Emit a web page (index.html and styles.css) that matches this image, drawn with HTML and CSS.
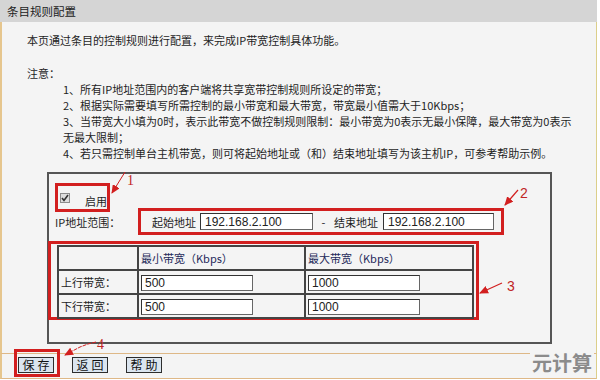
FILE: index.html
```html
<!DOCTYPE html>
<html lang="zh-CN">
<head>
    <meta charset="UTF-8">
    <title>条目规则配置</title>
    <link rel="stylesheet" href="styles.css">
</head>
<body>
    <div class="page">
        <div class="page-title">条目规则配置</div>

        <div class="content">
            <p class="intro">本页通过条目的控制规则进行配置，来完成IP带宽控制具体功能。</p>
            <p class="note-head">注意：</p>
            <div class="notes">
                <p>1、所有IP地址范围内的客户端将共享宽带控制规则所设定的带宽；</p>
                <p>2、根据实际需要填写所需控制的最小带宽和最大带宽，带宽最小值需大于10Kbps；</p>
                <p>3、当带宽大小填为0时，表示此带宽不做控制规则限制：最小带宽为0表示无最小保障，最大带宽为0表示<br>无最大限制；</p>
                <p>4、若只需控制单台主机带宽，则可将起始地址或（和）结束地址填写为该主机IP，可参考帮助示例。</p>
            </div>

            <div class="rule-box">
                <div class="enable mark-box">
                    <span class="check">
                        <svg width="8" height="8" viewBox="0 0 8 8"><path d="M1 4 L3 6.5 L7 1" fill="none" stroke="#333" stroke-width="1.6"/></svg>
                    </span>
                    <span class="enable-text">启用</span>
                </div>

                <div class="ip-row">
                    <span class="ip-label">IP地址范围：</span>
                    <span class="ip-range mark-box">
                        <span>起始地址</span>
                        <input class="txt ip-start" type="text" value="192.168.2.100">
                        <span class="dash">-</span>
                        <span>结束地址</span>
                        <input class="txt ip-end" type="text" value="192.168.2.100">
                    </span>
                </div>

                <div class="bw-wrap mark-box">
                    <table class="bw">
                        <colgroup>
                            <col class="c-name">
                            <col class="c-min">
                            <col class="c-max">
                        </colgroup>
                        <tr>
                            <td></td>
                            <td class="head">最小带宽（Kbps）</td>
                            <td class="head">最大带宽（Kbps）</td>
                        </tr>
                        <tr>
                            <td>上行带宽：</td>
                            <td><input class="txt bw-input" type="text" value="500"></td>
                            <td><input class="txt bw-input" type="text" value="1000"></td>
                        </tr>
                        <tr>
                            <td>下行带宽：</td>
                            <td><input class="txt bw-input" type="text" value="500"></td>
                            <td><input class="txt bw-input" type="text" value="1000"></td>
                        </tr>
                    </table>
                </div>
            </div>
        </div>

        <div class="actions">
            <button class="btn">保存</button>
            <button class="btn">返回</button>
            <button class="btn">帮助</button>
        </div>

        <!-- 标注箭头 -->
        <svg class="marks" width="600" height="380" viewBox="0 0 600 380">
            <defs>
                <marker id="head" markerWidth="9" markerHeight="8" refX="8" refY="4" orient="auto" markerUnits="userSpaceOnUse">
                    <path d="M0,0 L9,4 L0,8 z" fill="#d21f1f"/>
                </marker>
            </defs>
            <line x1="125" y1="172" x2="112" y2="193" stroke="#d21f1f" stroke-width="1" marker-end="url(#head)"/>
            <text class="num serif" x="127" y="185">1</text>
            <line x1="518" y1="190" x2="505" y2="205" stroke="#d21f1f" stroke-width="1.2" marker-end="url(#head)"/>
            <text class="num" x="520" y="198">2</text>
            <line x1="502" y1="283" x2="480" y2="293" stroke="#d21f1f" stroke-width="1.2" marker-end="url(#head)"/>
            <text class="num" x="507" y="291">3</text>
            <path d="M96 342 L88 344 L80 347 L65 355" fill="none" stroke="#d21f1f" stroke-width="1" stroke-dasharray="4 1" marker-end="url(#head)"/>
            <text class="num serif" x="97" y="349">4</text>
            <rect x="15.5" y="350.5" width="43" height="25" fill="none" stroke="#d21f1f" stroke-width="3"/>
        </svg>

        <div class="watermark">元计算</div>
    </div>
</body>
</html>
```

FILE: styles.css
```css
* {
    box-sizing: border-box;
}
body {
    margin: 0;
    background: #fff;
    font-family: "Noto Sans CJK SC", sans-serif;
    font-size: 11px;
    color: #1e1e1e;
}
p {
    margin: 0;
    line-height: 16px;
    white-space: nowrap;
}
.page {
    position: relative;
    width: 597px;
    height: 380px;
}
.page-title {
    height: 22px;
    line-height: 22px;
    padding-left: 7px;
    background: #d5d5d5;
    font-size: 11.5px;
    color: #222;
}
.content {
    background: #f4f4f4;
    border-left: 2px solid #e6c68e;
    border-right: 1px solid #dccf8a;
    border-bottom: 1px solid #deb887;
    padding: 10px 0 9px 25px;
}
.note-head {
    margin-top: 17px;
}
.notes {
    padding-left: 36px;
}
.rule-box {
    margin: 11px 0 0 20px;
    width: 505px;
    height: 172px;
    border: 2px solid #555;
}
.mark-box {
    border: 3px solid #d21f1f;
}
.enable {
    display: flex;
    align-items: flex-start;
    width: 55px;
    height: 29px;
    margin: 9px 0 0 6px;
    padding: 7px 0 0 2px;
}
.check {
    display: flex;
    align-items: center;
    justify-content: center;
    width: 10px;
    height: 10px;
    border: 1px solid #8c8c8c;
    background: #dedede;
}
.enable-text {
    margin-left: 15px;
    line-height: 16px;
}
.ip-row {
    display: flex;
    align-items: center;
    height: 27px;
    margin-top: -4px;
}
.ip-label {
    width: 89px;
    padding-left: 6px;
}
.ip-range {
    display: flex;
    align-items: center;
    width: 366px;
    height: 27px;
    padding-left: 11px;
}
.txt {
    height: 17px;
    margin: 0;
    padding: 0 4px;
    border: 1px solid #666;
    border-top-color: #333;
    border-left-color: #333;
    background: #fff;
    font: 12px "Liberation Sans", sans-serif;
    color: #222;
}
.ip-start {
    width: 113px;
    margin-left: 4px;
}
.ip-end {
    width: 111px;
    margin-left: 5px;
}
.dash {
    width: 21px;
    text-align: center;
}
.bw-wrap {
    width: 431px;
    height: 79px;
    margin: 6px 0 0 -1px;
    padding: 1px 0 0 6px;
}
.bw {
    width: 415px;
    border-collapse: collapse;
    table-layout: fixed;
}
.c-name {
    width: 80px;
}
.c-min {
    width: 167px;
}
.c-max {
    width: 168px;
}
.bw tr {
    height: 24px;
}
.bw td {
    border: 2px solid #444;
    padding: 0 0 0 2px;
    white-space: nowrap;
}
.bw .head {
    color: #1f2a5a;
}
.bw-input {
    width: 112px;
    height: 16px;
    padding-left: 3px;
}
.actions {
    display: flex;
    gap: 18px;
    height: 25px;
    padding: 3px 0 0 16px;
    background: #f4f4f4;
    border-left: 2px solid #e6c68e;
    border-right: 1px solid #dccf8a;
    border-bottom: 1px solid #deb887;
}
.btn {
    width: 36px;
    height: 16px;
    padding: 0 0 0 3px;
    border: 1px solid #2d2d2d;
    background: #dbe5ef;
    font: 12px "Noto Sans CJK SC", sans-serif;
    line-height: 14px;
    letter-spacing: 3px;
    color: #111;
}
.marks {
    position: absolute;
    top: 0;
    left: 0;
    pointer-events: none;
}
.num {
    font: 14px "Liberation Sans", sans-serif;
    fill: #c02525;
}
.num.serif {
    font-family: "Liberation Serif", serif;
}
.watermark {
    position: absolute;
    top: 352px;
    left: 530px;
    padding: 0 2px;
    background: #f4f4f4;
    font: bold 20px "Noto Sans CJK SC", sans-serif;
    line-height: 22px;
    color: #8b8b8b;
}
```
